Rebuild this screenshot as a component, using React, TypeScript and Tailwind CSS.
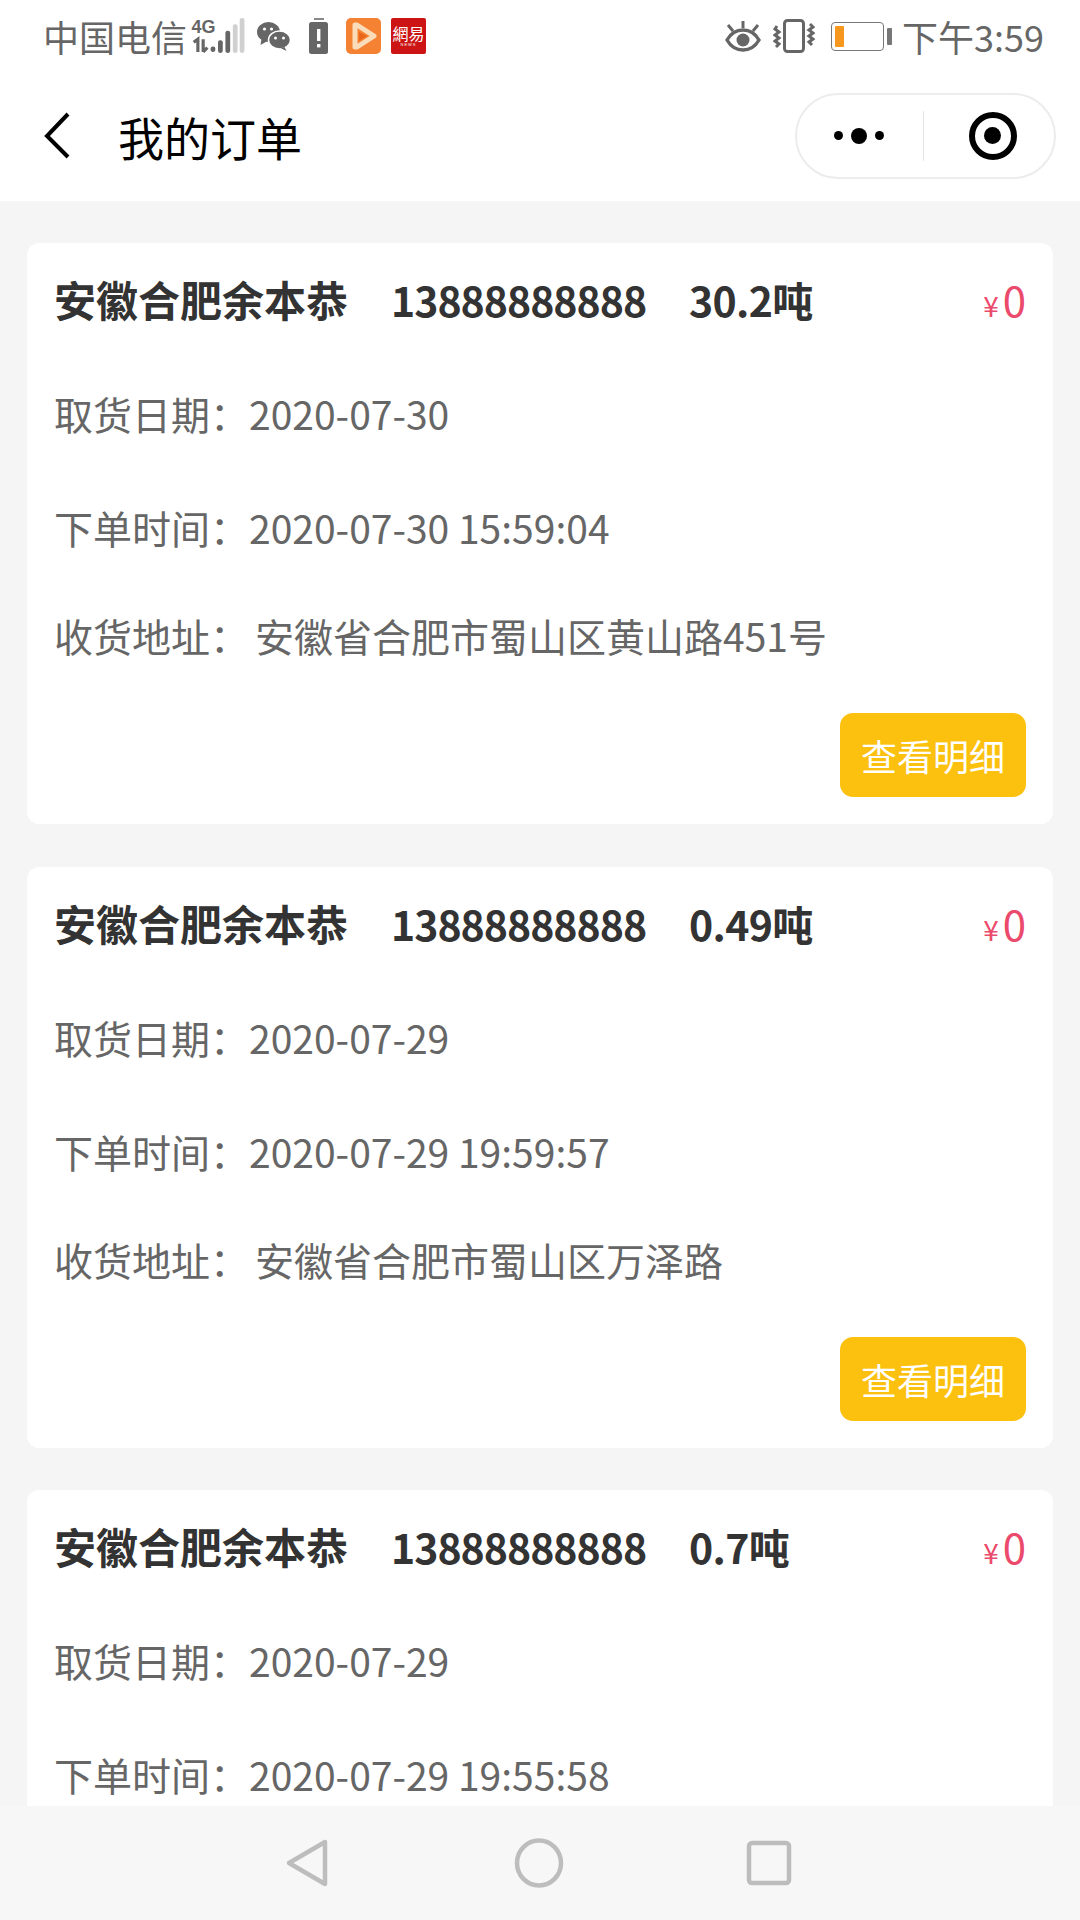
import React from "react";

type Order = {
  title: string;
  weight: string;
  pickup: string;
  placed: string;
  address?: string;
};

const orders: Order[] = [
  { title: "安徽合肥余本恭", weight: "30.2吨", pickup: "2020-07-30", placed: "2020-07-30 15:59:04", address: "安徽省合肥市蜀山区黄山路451号" },
  { title: "安徽合肥余本恭", weight: "0.49吨", pickup: "2020-07-29", placed: "2020-07-29 19:59:57", address: "安徽省合肥市蜀山区万泽路" },
  { title: "安徽合肥余本恭", weight: "0.7吨", pickup: "2020-07-29", placed: "2020-07-29 19:55:58" },
];

const FONT = "font-['Noto_Sans_CJK_SC','Noto_Sans',sans-serif]";

function SignalIcon() {
  return (
    <svg width="54" height="36" viewBox="0 0 50 34" className="ml-[4px]">
      <text x="0" y="14" fontSize="17" fontWeight="700" fill="#666" fontFamily="'Liberation Sans',sans-serif">4G</text>
      <path d="M2 23l4-3v12M11 20v12M11 32l4-4" stroke="#666" strokeWidth="3" fill="none" />
      <rect x="18" y="27" width="4.5" height="5" rx="2" fill="#666" />
      <rect x="25" y="21" width="4.5" height="12" rx="2" fill="#666" />
      <rect x="32" y="12" width="4.5" height="21" rx="2" fill="#666" />
      <rect x="39" y="6" width="4.5" height="27" rx="2" fill="#d0d0d0" />
      <rect x="45.5" y="0" width="4.5" height="33" rx="2" fill="#d0d0d0" />
    </svg>
  );
}

function WeChatIcon() {
  return (
    <svg width="35" height="30" viewBox="0 0 34 30" className="ml-[11px]">
      <ellipse cx="12" cy="11" rx="11.5" ry="10" fill="#666" />
      <path d="M5 18l-1 6 7-4z" fill="#666" />
      <ellipse cx="23" cy="19" rx="11" ry="9" fill="#666" stroke="#fff" strokeWidth="1.5" />
      <path d="M28 26l2 4-6-3z" fill="#666" />
      <circle cx="8" cy="8" r="1.6" fill="#fff" />
      <circle cx="15" cy="8" r="1.6" fill="#fff" />
      <circle cx="19" cy="17" r="1.5" fill="#fff" />
      <circle cx="27" cy="17" r="1.5" fill="#fff" />
    </svg>
  );
}

function AlertBatteryIcon() {
  return (
    <svg width="20" height="36" viewBox="0 0 20 36" className="ml-[18px]">
      <rect x="5" y="0" width="10" height="2" fill="#888" />
      <rect x="0" y="4" width="19" height="32" rx="2.5" fill="#666" />
      <rect x="8" y="11" width="3.4" height="12" fill="#fff" />
      <rect x="8" y="26" width="3.4" height="3.4" fill="#fff" />
    </svg>
  );
}

function VideoAppIcon() {
  return (
    <svg width="35" height="36" viewBox="0 0 35 36" className="ml-[17px]">
      <rect width="35" height="36" rx="5" fill="#f58233" />
      <path d="M9 7h2l17 11-17 11H9z" fill="none" stroke="#fbdcb8" strokeWidth="5" strokeLinejoin="round" />
      <path d="M13 14l8 4-8 5z" fill="#e8651a" />
    </svg>
  );
}

function NewsAppIcon() {
  return (
    <div className="ml-[10px] flex h-[36px] w-[35px] flex-col items-center justify-center rounded-[2px] bg-[#cc1414] text-white">
      <span className={`${FONT} text-[16px] leading-[18px] whitespace-nowrap`}>網易</span>
      <span className="font-['Liberation_Sans',sans-serif] text-[4px] leading-[6px] tracking-[1px]">NEWS</span>
    </div>
  );
}

function EyeIcon() {
  return (
    <svg width="36" height="32" viewBox="0 0 36 32">
      <path d="M2 20c4-7 10-10 16-10s12 3 16 10c-4 7-10 10-16 10S6 27 2 20z" fill="none" stroke="#666" strokeWidth="3.4" />
      <circle cx="18" cy="20" r="6.5" fill="#666" />
      <path d="M18 1v7M3 5l5 6M33 5l-5 6" stroke="#666" strokeWidth="3" />
    </svg>
  );
}

function VibrateIcon() {
  return (
    <svg width="42" height="34" viewBox="0 0 42 34" className="ml-[12px]">
      <rect x="11.5" y="1.5" width="19" height="31" rx="3" fill="none" stroke="#666" strokeWidth="3" />
      <path d="M4 7l-2 3 4 3-4 3 4 3-4 3 4 3-3 3" fill="none" stroke="#666" strokeWidth="3" />
      <path d="M37 5l3 3-4 3 4 3-4 3 4 3-4 3 3 3" fill="none" stroke="#666" strokeWidth="3" />
    </svg>
  );
}

function BatteryIcon() {
  return (
    <div className="ml-[16px] flex items-center">
      <div className="flex h-[29px] w-[53px] items-center rounded-[4px] border border-[#777] px-[3px]">
        <div className="h-[21px] w-[9px] rounded-[1px] bg-[#f7971d]" />
      </div>
      <div className="ml-[3px] h-[17px] w-[5px] rounded-[1px] bg-[#777]" />
    </div>
  );
}

function StatusBar() {
  return (
    <div className={`${FONT} flex h-[74px] items-center justify-between bg-white pb-[2px] pl-[43px] pr-[36px] text-[#666]`}>
      <div className="flex items-center">
        <span className="text-[36px] leading-[40px]">中国电信</span>
        <SignalIcon />
        <WeChatIcon />
        <AlertBatteryIcon />
        <VideoAppIcon />
        <NewsAppIcon />
      </div>
      <div className="flex items-center">
        <EyeIcon />
        <VibrateIcon />
        <BatteryIcon />
        <span className="ml-[10px] text-[36px] leading-[40px]">下午3:59</span>
      </div>
    </div>
  );
}

function TitleBar() {
  return (
    <div className="flex h-[127px] items-center bg-white pb-[4px] pr-[24px]">
      <svg width="32" height="48" viewBox="0 0 32 48" className="ml-[42px]">
        <path d="M26 2L5 24l21 21" fill="none" stroke="#000" strokeWidth="4" />
      </svg>
      <span className={`${FONT} ml-[44px] text-[46px] leading-[56px] text-black`}>我的订单</span>
      <div className="ml-auto flex h-[86px] w-[261px] items-center rounded-full border-2 border-[#ececec] bg-white">
        <div className="mr-[2px] flex w-[124px] items-center justify-center gap-[8px]">
          <span className="h-[9px] w-[9px] rounded-full bg-black" />
          <span className="h-[16px] w-[16px] rounded-full bg-black" />
          <span className="h-[9px] w-[9px] rounded-full bg-black" />
        </div>
        <div className="h-[50px] w-px bg-[#e5e5e5]" />
        <div className="flex flex-1 items-center justify-center pl-[7px]">
          <div className="flex h-[48px] w-[48px] items-center justify-center rounded-full border-[6px] border-black">
            <div className="h-[17px] w-[17px] rounded-full bg-black" />
          </div>
        </div>
      </div>
    </div>
  );
}

function OrderCard({ order }: { order: Order }) {
  return (
    <div className="mb-[42.5px] min-h-[580px] rounded-[12px] bg-white pb-[27px] pl-[27px] pr-[27px] pt-[26px]">
      <div className="flex h-[60px] items-center justify-between text-[42px] leading-[60px]">
        <div className="whitespace-pre font-bold text-[#333]">
          {order.title}
          <span className="ml-[43px] text-[41px] tracking-[-1px]">13888888888</span>
          <span className="ml-[43px] text-[41px] tracking-[-0.7px]">{order.weight}</span>
        </div>
        <div className="mt-[6px] flex items-baseline text-[#ec4a6c]">
          <span className="text-[28px]">¥</span>
          <span className="ml-[4px] text-[42px]">0</span>
        </div>
      </div>
      <div className="mt-[54px] h-[60px] text-[39px] leading-[60px] text-[#666]">
        取货日期：<span>{order.pickup}</span>
      </div>
      <div className="mt-[54px] h-[60px] text-[39px] leading-[60px] text-[#666]">
        下单时间：<span>{order.placed}</span>
      </div>
      {order.address && (
        <>
          <div className="mt-[48px] h-[60px] text-[39px] leading-[60px] text-[#666]">
            收货地址：<span className="ml-[6px]">{order.address}</span>
          </div>
          <div className="mt-[48px] flex justify-end">
            <button className="flex h-[84px] w-[186px] items-center justify-center rounded-[13px] bg-[#fcc00e] text-[36px] text-white">
              查看明细
            </button>
          </div>
        </>
      )}
    </div>
  );
}

function NavBar() {
  return (
    <div className="flex h-[114px] shrink-0 items-center justify-center bg-[#f7f7f7] pr-[4px]">
      <svg width="46" height="50" viewBox="0 0 46 50" className="mr-[183px]">
        <path d="M40 4v42L4 25z" fill="none" stroke="#bdbdbd" strokeWidth="4.5" strokeLinejoin="round" />
      </svg>
      <svg width="50" height="50" viewBox="0 0 50 50">
        <ellipse cx="25" cy="25" rx="22" ry="22.5" fill="none" stroke="#bdbdbd" strokeWidth="4.5" />
      </svg>
      <svg width="46" height="46" viewBox="0 0 46 46" className="ml-[182px]">
        <rect x="3" y="3" width="40" height="40" rx="3" fill="none" stroke="#bdbdbd" strokeWidth="4.5" />
      </svg>
    </div>
  );
}

export default function App() {
  return (
    <div className={`${FONT} flex h-[1920px] w-[1080px] flex-col overflow-hidden bg-[#f5f5f5]`}>
      <StatusBar />
      <TitleBar />
      <div className="min-h-0 flex-1 overflow-hidden px-[27px] pt-[42px]">
        {orders.map((order, i) => (
          <OrderCard key={i} order={order} />
        ))}
      </div>
      <NavBar />
    </div>
  );
}
